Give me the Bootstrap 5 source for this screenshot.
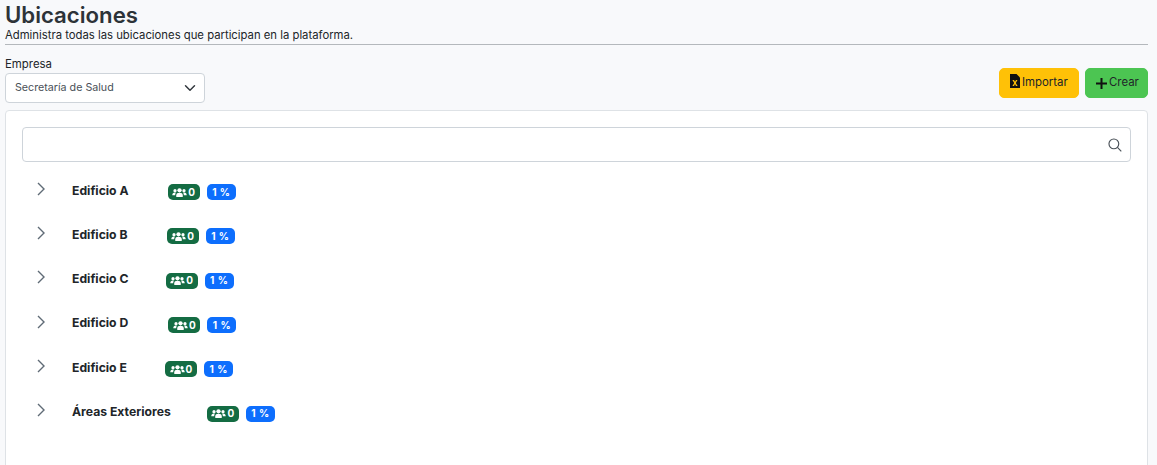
<!DOCTYPE html>
<html lang="es">

<head>
    <meta charset="UTF-8">
    <meta name="viewport" content="width=device-width, initial-scale=1">
    <title>Ubicaciones</title>
    <!-- Bootstrap CSS -->
    <link href="https://cdn.jsdelivr.net/npm/bootstrap@5.3.0/dist/css/bootstrap.min.css" rel="stylesheet">
    <style>
        html,
        body {
            height: 465px;
            overflow: hidden;
        }

        body {
            background-color: #f8f9fb;
            color: #212529;
            font-family: Inter, "Open Sans", sans-serif;
            padding: 0 9px 0 5px;
        }

        .page-title {
            font-size: 22.2px;
            font-weight: 600;
            line-height: 26px;
            color: #2d3338;
            margin: 2px 0 0;
        }

        .page-sub {
            font-size: 11.3px;
            line-height: 14px;
            padding-bottom: 2px;
            border-bottom: 1px solid #b4b8bc;
            margin: 0 0 11px;
        }

        .top-bar {
            height: 47px;
            margin-bottom: 7px;
        }

        .empresa-label {
            font-size: 11.4px;
            line-height: 16px;
            margin-bottom: 1px;
            display: block;
        }

        .empresa-select {
            width: 200px;
            height: 30px;
            font-size: 10.7px;
            padding: 0 9px;
            border-radius: 4px;
            border-color: #ced4da;
            color: #495057;
            background-size: 16px 12px;
            background-position: right 6px center;
        }

        .action-row {
            gap: 6px;
            padding-bottom: 5px;
        }

        .act-btn {
            height: 30px;
            font-size: 11.4px;
            padding: 0 7px 0 10px;
            border-radius: 5px;
            color: #212529;
            display: flex;
            align-items: center;
        }

        .btn-importar {
            width: 80px;
            background-color: #ffc107;
            border-color: #ffc107;
        }

        .btn-crear {
            width: 63px;
            background-color: #4cc552;
            border-color: #4cc552;
        }

        .btn-gap {
            margin-left: 2px;
        }

        .main-panel {
            height: 400px;
            padding: 16px;
            border-radius: 4px;
            border-color: #dee2e6;
        }

        .search-box {
            height: 35px;
            border: 1px solid #ced4da;
            border-radius: 4px;
            padding-right: 8px;
            margin-bottom: 6px;
        }

        .tree-row {
            height: 44.3px;
            font-size: 12.2px;
            font-weight: 700;
            color: #212529;
        }

        .tree-arrow {
            width: 50px;
            padding-left: 14px;
            margin-top: -4px;
        }

        .tree-name {
            margin-top: 1px;
        }

        .tag-users,
        .tag-pct {
            font-size: 10px;
            font-weight: 700;
            color: #fff;
            height: 16px;
            border-radius: 5px;
            display: inline-flex;
            align-items: center;
            justify-content: center;
            margin-top: 4px;
        }

        .tag-users {
            width: 32px;
            background-color: #146c43;
            gap: 1px;
            margin-right: 7px;
        }

        .tag-pct {
            width: 29px;
            background-color: #0d6efd;
            word-spacing: 1px;
        }
    </style>
</head>

<body>

    <!-- Header -->
    <h1 class="page-title">Ubicaciones</h1>
    <p class="page-sub">Administra todas las ubicaciones que participan en la plataforma.</p>

    <!-- Company filter and actions -->
    <div class="d-flex justify-content-between align-items-end top-bar">
        <div>
            <label class="empresa-label" for="empresa">Empresa</label>
            <select class="form-select empresa-select" id="empresa">
                <option>Secretaría de Salud</option>
            </select>
        </div>
        <div class="d-flex action-row">
            <button class="btn act-btn btn-importar" type="button">
                <svg class="mb-1" width="10" height="14" viewBox="0 0 10 14">
                    <path fill="#111" d="M0 0h6.5L10 3.5V14H0z" />
                    <path fill="#ffc107" d="M2.4 6h1.6l1 1.7L6 6h1.5L5.8 8.9l1.8 3H6l-1-1.9-1 1.9H2.4l1.8-3z" />
                </svg>
                <span class="btn-gap">Importar</span>
            </button>
            <button class="btn act-btn btn-crear" type="button">
                <svg width="11" height="11" viewBox="0 0 11 11">
                    <path fill="#111" d="M4.5 0h2v4.5H11v2H6.5V11h-2V6.5H0v-2h4.5z" />
                </svg>
                <span class="btn-gap">Crear</span>
            </button>
        </div>
    </div>

    <!-- Locations tree -->
    <div class="card main-panel">
        <div class="d-flex justify-content-end align-items-center search-box">
            <svg width="14" height="14" viewBox="0 0 16 16" fill="none" stroke="#495057" stroke-width="1.3">
                <circle cx="6.7" cy="6.7" r="5.6" />
                <path d="M10.8 10.8l4.4 4.4" />
            </svg>
        </div>

        <div id="tree"></div>
    </div>

    <script>
        // gap = space between the name and its badges
        const locations = [
            { name: "Edificio A", gap: 39 },
            { name: "Edificio B", gap: 39 },
            { name: "Edificio C", gap: 37 },
            { name: "Edificio D", gap: 40 },
            { name: "Edificio E", gap: 38 },
            { name: "Áreas Exteriores", gap: 36 }
        ];

        const usersIcon = `<svg width="15" height="9" viewBox="0 0 16 10" fill="#fff">
            <circle cx="8" cy="2.6" r="2.4" /><circle cx="3" cy="3" r="1.8" /><circle cx="13" cy="3" r="1.8" />
            <path d="M4.4 10V8c0-1.7 1.4-2.6 3.6-2.6s3.6.9 3.6 2.6v2z" />
            <path d="M0 8c0-2 1-2.9 2.8-2.9.5 0 .9.1 1.2.2C3.4 6 3.2 7 3.2 8zM16 8c0-2-1-2.9-2.8-2.9-.5 0-.9.1-1.2.2.6.7.8 1.7.8 2.7z" />
        </svg>`;

        document.getElementById("tree").innerHTML = locations.map(loc => `
            <div class="d-flex align-items-center tree-row">
                <div class="tree-arrow">
                    <svg width="10" height="14" viewBox="0 0 10 14" fill="none" stroke="#5f6b76" stroke-width="1.4">
                        <path d="M2 1l6 6-6 6" />
                    </svg>
                </div>
                <span class="tree-name" style="margin-right: ${loc.gap}px">${loc.name}</span>
                <span class="tag-users">${usersIcon}0</span>
                <span class="tag-pct">1 %</span>
            </div>`).join("");
    </script>

    <!-- Bootstrap JS -->
    <script src="https://cdn.jsdelivr.net/npm/bootstrap@5.3.0/dist/js/bootstrap.bundle.min.js"></script>

</body>

</html>
